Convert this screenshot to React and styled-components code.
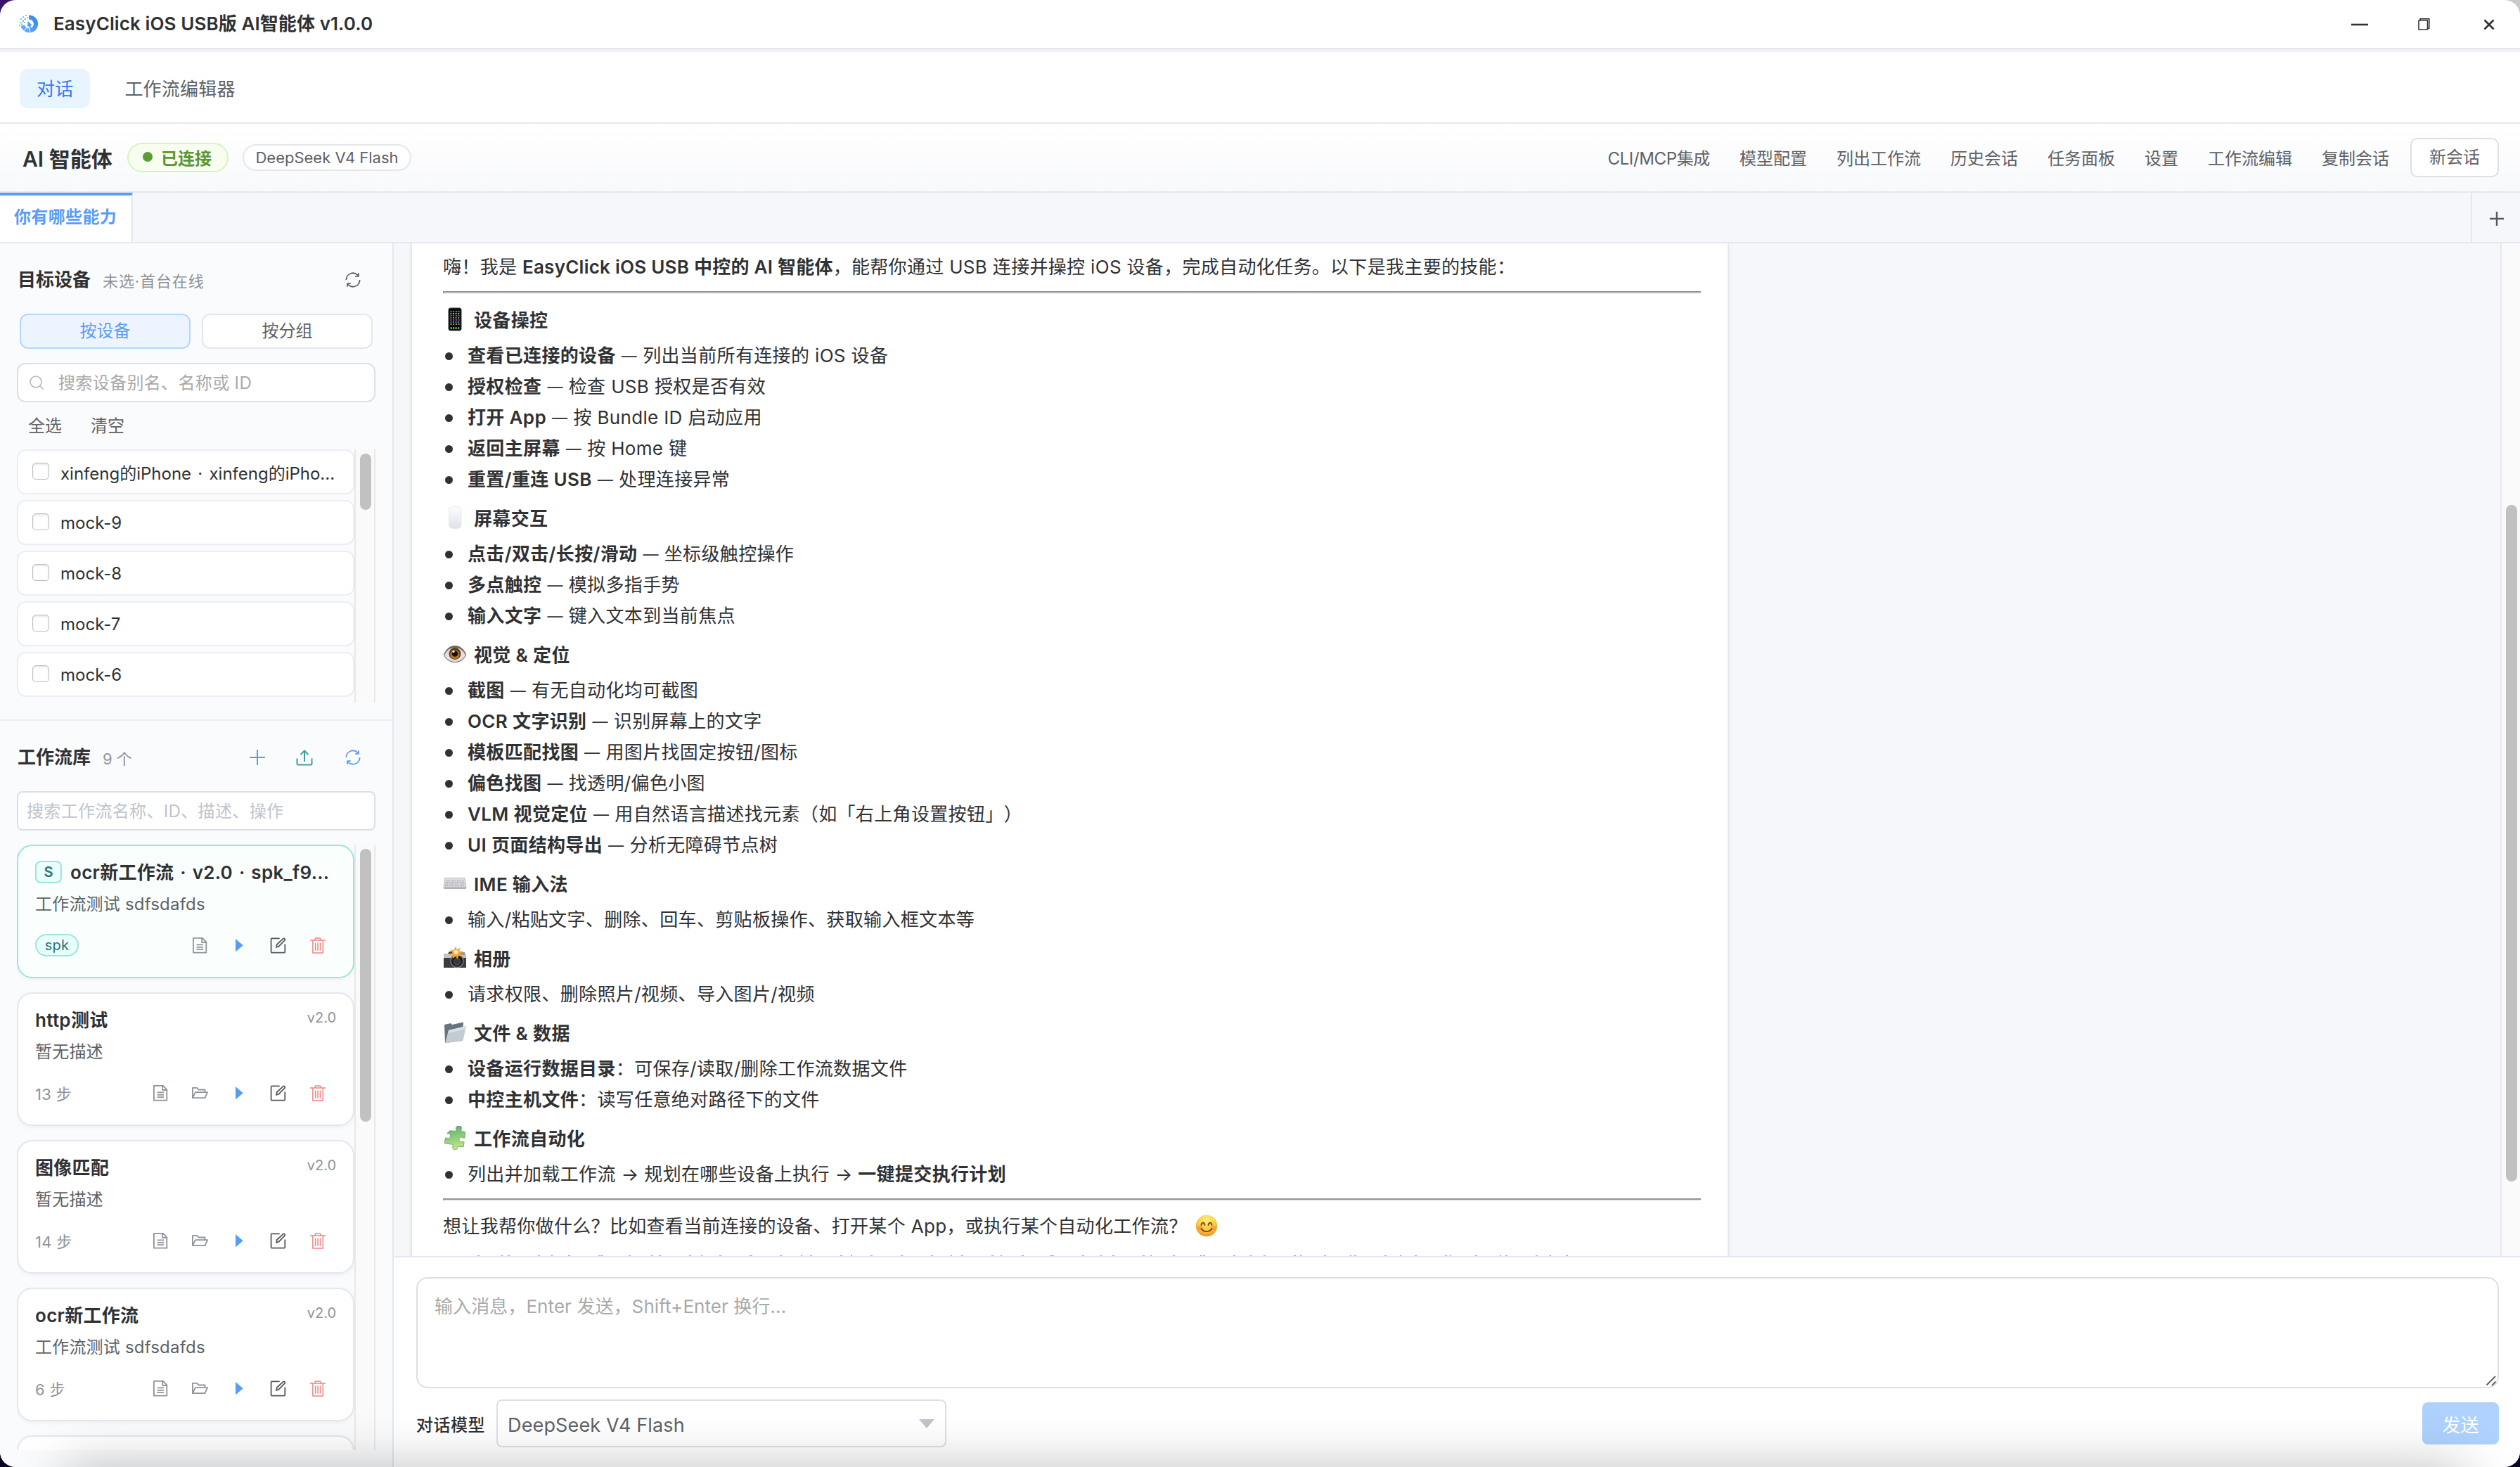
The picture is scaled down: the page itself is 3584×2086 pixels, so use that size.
import React from 'react';
import styled, { createGlobalStyle, css } from 'styled-components';

const GlobalStyle = createGlobalStyle`
	* {
		box-sizing: border-box;
	}
	body {
		margin: 0;
		color: #303133;
		font-family: Inter, 'Noto Sans CJK SC', sans-serif;
		font-size: 26px;
		text-spacing-trim: space-all;
		background:
			linear-gradient(90deg, transparent 50%, #c9c9cb 50%) top / 100% 60px no-repeat,
			linear-gradient(#3a1468, #0b0524);
	}
	input,
	textarea,
	button {
		font-family: inherit;
		margin: 0;
	}
`;

const Window = styled.div`
	position: relative;
	display: flex;
	flex-direction: column;
	width: 3584px;
	height: 2086px;
	overflow: hidden;
	border-radius: 22px;
	background: #fff;
`;

/* soft shadow that the dock throws on the lower edge */
const DockShade = styled.div`
	position: absolute;
	left: 90px;
	right: 78px;
	top: 100%;
	height: 100px;
	border-radius: 20px;
	box-shadow: 0 0 72px rgba(0, 0, 0, 0.25);
	pointer-events: none;
`;

const TitleBar = styled.header`
	display: flex;
	align-items: center;
	height: 70px;
	padding: 0 32px 0 27px;
	border-bottom: 2px solid #e4e7ed;
`;

const Title = styled.div`
	flex: 1;
	margin-left: 21px;
	font-weight: 600;
	letter-spacing: 0.1px;
	line-height: 40px;
	white-space: nowrap;
`;

const WindowButtons = styled.div`
	display: flex;
	align-items: center;
	gap: 68px;
`;

const Nav = styled.nav`
	display: flex;
	align-items: center;
	height: 106px;
	padding: 3px 28px 0;
	border-top: 4px solid #f0f2f6;
	border-bottom: 2px solid #e8e8e8;
`;

const NavTab = styled.div`
	height: 56px;
	padding: 0 24px;
	margin-right: 25px;
	border-radius: 12px;
	line-height: 57px;
	letter-spacing: 0.2px;
	color: ${({ $active }) => ($active ? '#3478f6' : '#606266')};
	background: ${({ $active }) => ($active ? '#e8f4ff' : 'none')};
`;

const Header = styled.div`
	display: flex;
	align-items: center;
	height: 98px;
	padding: 0 30px 0 32px;
	border-bottom: 2px solid #e4e7ed;
	background: linear-gradient(#fff, #f8f9fb);
`;

const HeaderTitle = styled.div`
	width: 149px;
	font-size: 30px;
	font-weight: 600;
	white-space: nowrap;
`;

const Status = styled.div`
	display: flex;
	align-items: center;
	width: 144px;
	height: 42px;
	padding: 0 0 2px 20px;
	border: 2px solid #d9f2bf;
	border-radius: 21px;
	background: #f7fdef;
	color: #5a9632;
	font-size: 24px;
	font-weight: 600;

	&::before {
		content: '';
		width: 14px;
		height: 14px;
		margin-right: 12px;
		border-radius: 50%;
		background: #5f9c38;
	}
`;

const ModelChip = styled.div`
	width: 240px;
	height: 38px;
	margin-left: 20px;
	border: 2px solid #e4e7ed;
	border-radius: 19px;
	background: #fff;
	color: #606266;
	font-size: 22px;
	line-height: 35px;
	text-align: center;
	white-space: nowrap;
`;

const Menu = styled.div`
	display: flex;
	align-items: center;
	gap: 42px;
	margin-left: auto;
	color: #606266;
	font-size: 24px;
	white-space: nowrap;

	span {
		padding-bottom: 2px;
	}
	span:first-child {
		letter-spacing: -0.35px;
	}
`;

const NewChat = styled.div`
	width: 126px;
	height: 56px;
	margin-left: -12px;
	border: 2px solid #dcdfe6;
	border-radius: 10px;
	background: #fff;
	line-height: 51px;
	text-align: center;
`;

const TabStrip = styled.div`
	display: flex;
	justify-content: space-between;
	height: 72px;
	border-bottom: 2px solid #e4e7ed;
	background: #f5f7fb;
`;

const ChatTab = styled.div`
	width: 189px;
	padding-left: 20px;
	border-top: 4px solid #5a9cf8;
	border-right: 2px solid #e4e7ed;
	background: #fff;
	color: #5a9cf8;
	font-size: 24px;
	font-weight: 600;
	letter-spacing: 0.35px;
	line-height: 62px;
	white-space: nowrap;
`;

const AddTab = styled.div`
	display: flex;
	align-items: center;
	justify-content: center;
	width: 70px;
	padding: 3px 0 0 2px;
	border-left: 2px solid #e4e7ed;
	color: #55585d;
`;

const Main = styled.div`
	display: flex;
	flex: 1;
	min-height: 0;
`;

const Sidebar = styled.aside`
	display: flex;
	flex-direction: column;
	width: 560px;
	border-right: 2px solid #e4e7ed;
	background: #fafbfd;
`;

const DevicePanel = styled.section`
	height: 679px;
	padding: 30px 24px 0;
	border-bottom: 2px solid #ebeef5;
`;

const FlowPanel = styled.section`
	height: 1037px;
	padding: 30px 24px 0;
`;

const PanelHead = styled.div`
	display: flex;
	align-items: center;
	height: 44px;
	padding-right: 18px;
	gap: 43px;
`;

const PanelTitle = styled.h3`
	margin: 0 -26px 0 1px;
	font-size: 26px;
	font-weight: 600;
	line-height: 46px;
`;

const PanelNote = styled.span`
	flex: 1;
	padding-top: 3px;
	color: #909399;
	font-size: 22px;
	letter-spacing: ${({ $ls }) => $ls || 0}px;
	line-height: 44px;
`;

const Segments = styled.div`
	display: flex;
	gap: 16px;
	margin-top: 26px;
	padding: 0 4px;
`;

const Segment = styled.div`
	flex: 1;
	height: 50px;
	border: 2px solid ${({ $active }) => ($active ? '#b3d8ff' : '#e4e7ed')};
	border-radius: 12px;
	background: ${({ $active }) => ($active ? '#edf4ff' : '#fff')};
	color: ${({ $active }) => ($active ? '#5a9cf8' : '#606266')};
	font-size: 24px;
	line-height: 46px;
	text-align: center;
`;

const SearchBox = styled.label`
	display: flex;
	align-items: center;
	height: 56px;
	padding-left: ${({ $icon }) => ($icon ? 15 : 12)}px;
	gap: 20px;
	border: 2px solid #dcdfe6;
	border-radius: ${({ $icon }) => ($icon ? 12 : 8)}px;
	background: #fff;
	margin-top: ${({ $icon }) => ($icon ? 20 : 26)}px;

	input {
		flex: 1;
		min-width: 0;
		padding: 1px 0 0;
		border: 0;
		outline: 0;
		background: none;
		font-size: 24px;
		letter-spacing: 0.35px;
		line-height: 40px;
	}
	input::placeholder {
		color: ${({ $icon }) => ($icon ? '#a9a9a9' : '#c0c4cc')};
		opacity: 1;
	}
`;

const PickLinks = styled.div`
	display: flex;
	gap: 41px;
	height: 67px;
	padding-left: 16px;
	color: #606266;
	font-size: 24px;
	line-height: 67px;
`;

const Scroller = styled.div`
	display: flex;
	height: ${({ $h }) => $h}px;
	margin-top: ${({ $top }) => $top || 0}px;
	overflow: hidden;
`;

const List = styled.div`
	display: flex;
	flex-direction: column;
	width: 480px;
	gap: ${({ $gap }) => $gap}px;
`;

const Track = styled.div`
	width: ${({ $w }) => $w || 30}px;
	padding: ${({ $top }) => $top || 6}px 0 0 6px;
	border: solid #e8e8e8;
	border-width: 0 ${({ $w }) => ($w ? 0 : 2)}px 0 2px;
	background: #fafafa;
`;

const Thumb = styled.div`
	width: 16px;
	height: ${({ $h }) => $h}px;
	border-radius: 8px;
	background: #c1c1c1;
`;

const DeviceRow = styled.label`
	display: flex;
	flex: none;
	align-items: center;
	height: 64px;
	padding: 0 12px 0 20px;
	gap: 16px;
	border: 2px solid #ebeef5;
	border-radius: 12px;
	background: #fff;
	font-size: 24px;
	word-spacing: 2.5px;
	white-space: nowrap;
`;

const Check = styled.i`
	flex: none;
	width: 24px;
	height: 24px;
	margin-bottom: 2px;
	border: 1.5px solid #bdbdbd;
	border-radius: 5px;
	background: #fff;
	box-shadow: inset 0 2px 3px rgba(0, 0, 0, 0.1);
`;

const Card = styled.article`
	flex: none;
	height: 190px;
	padding: 17px 24px 0;
	border: 2px solid #e4e7ed;
	border-radius: 22px;
	background: #fff;
	box-shadow: 0 2px 6px rgba(0, 0, 0, 0.05);

	${({ $spk }) =>
		$spk &&
		css`
			border-color: #9ae6dc;
			background: #fafffe;
		`}
`;

const CardHead = styled.div`
	display: flex;
	align-items: center;
	height: 42px;
	gap: 12px;
`;

const CardTitle = styled.div`
	flex: 1;
	font-size: 26px;
	font-weight: 600;
	line-height: 42px;
	letter-spacing: 0.3px;
	word-spacing: 2px;
	white-space: nowrap;
`;

const SpkMark = styled.span`
	width: 38px;
	height: 32px;
	margin-bottom: 2px;
	border: 2px solid #9ae6dc;
	border-radius: 8px;
	background: #e8fffc;
	color: #2b6f76;
	font-size: 20px;
	font-weight: 600;
	line-height: 29px;
	text-align: center;
`;

const Version = styled.span`
	padding-bottom: 8px;
	color: #909399;
	font-size: 20px;
`;

const CardText = styled.div`
	height: 36px;
	margin-top: 6px;
	color: #606266;
	font-size: 24px;
	letter-spacing: 0.2px;
	line-height: 36px;
`;

const CardFoot = styled.div`
	display: flex;
	align-items: center;
	height: 40px;
	margin-top: 20px;
	color: #909399;
	font-size: 22px;
	letter-spacing: 0.3px;
`;

const SpkTag = styled.span`
	width: 62px;
	height: 32px;
	border: 2px solid #9ae6dc;
	border-radius: 16px;
	background: #e8fffc;
	color: #2b6f76;
	font-size: 20px;
	line-height: 29px;
	text-align: center;
`;

const Actions = styled.div`
	display: flex;
	gap: 28px;
	margin-left: auto;
	padding-right: 12px;

	svg {
		width: 28px;
		height: 28px;
	}
`;

const ChatColumn = styled.main`
	display: flex;
	flex-direction: column;
	flex: 1;
	min-width: 0;
`;

const Messages = styled.div`
	display: flex;
	justify-content: space-between;
	height: 1440px;
	padding-left: 24px;
	overflow: hidden;
	background: #f5f7fb;
`;

const Bubble = styled.div`
	width: 1875px;
	padding: 11px 38px 0 44px;
	border: solid #e4e7ed;
	border-width: 0 2px;
	background: #fff;
	box-shadow: 0 2px 8px rgba(0, 0, 0, 0.05);
	white-space: nowrap;
`;

const Paragraph = styled.p`
	display: flex;
	align-items: center;
	margin: 0;
	height: 44px;
	line-height: 45px;
	letter-spacing: 0.32px;
	white-space: pre;

	b {
		font-weight: 600;
		letter-spacing: 0.25px;
	}
	svg {
		margin-left: 10px;
	}
`;

const Rule = styled.hr`
	height: 4px;
	margin: 13px 0 ${({ $after }) => $after}px;
	border: 0;
	border-top: 2px solid #949494;
	border-left: 1px solid #949494;
	border-bottom: 2px solid #eee;
`;

const SectionTitle = styled.h4`
	display: flex;
	align-items: center;
	gap: 10px;
	height: 44px;
	margin: 0 0 6px;
	padding-bottom: 3px;
	font-size: 26px;
	font-weight: 600;
	letter-spacing: 0.35px;

	ul + & {
		margin-top: 12px;
	}
`;

const Bullets = styled.ul`
	margin: 0;
	padding: 0 0 0 3px;
	list-style: none;
`;

const Bullet = styled.li`
	display: flex;
	align-items: center;
	height: 44px;
	padding-top: 2px;
	line-height: 44px;
	letter-spacing: 0.35px;
	white-space: pre;

	&::before {
		content: '';
		width: 11px;
		height: 11px;
		margin-right: 21px;
		border-radius: 50%;
		background: #303133;
	}
	b {
		font-weight: 600;
	}
`;

const Dash = styled.span`
	margin: 0 8px;
	font-size: 22px;
`;

/* upper edge of the next line, cut by the composer */
const CutLine = styled.div`
	width: 1590px;
	height: 2px;
	margin: 20px 0 0 32px;
	background:
		repeating-linear-gradient(90deg, transparent 0 17px, #aaa 17px 20px, transparent 20px 43px),
		repeating-linear-gradient(90deg, transparent 0 51px, #999 51px 53px, transparent 53px 71px);
`;

const Composer = styled.div`
	flex: 1;
	padding: 28px 30px 0 32px;
	border-top: 2px solid #e4e7ed;
	background: #fff;
`;

const InputWrap = styled.div`
	position: relative;
	height: 158px;

	textarea {
		display: block;
		width: 100%;
		height: 100%;
		padding: 19px 24px;
		border: 2px solid #dcdfe6;
		border-radius: 16px;
		outline: 0;
		resize: none;
		font-size: 26px;
		letter-spacing: 0.08px;
		line-height: 42px;
	}
	textarea::placeholder {
		color: #a9a9a9;
		opacity: 1;
	}
	svg {
		position: absolute;
		right: 3px;
		bottom: 3px;
	}
`;

const ComposerFoot = styled.div`
	display: flex;
	align-items: center;
	height: 68px;
	margin-top: 16px;
`;

const ModelLabel = styled.span`
	width: 114px;
	font-size: 24px;
	font-weight: 500;
	letter-spacing: 0.5px;
`;

const ModelSelect = styled.div`
	display: flex;
	align-items: center;
	justify-content: space-between;
	width: 640px;
	height: 68px;
	padding: 4px 15px 0 14px;
	border: 2px solid #dcdfe6;
	border-radius: 8px;
	color: #606266;
	font-size: 27px;
	letter-spacing: 0.15px;
`;

const SendButton = styled.button`
	width: 109px;
	height: 60px;
	margin-left: auto;
	padding: 0;
	border: 0;
	border-radius: 8px;
	background: #aed2fd;
	color: #fff;
	font-size: 26px;
`;

const Stroke = ({ size = 28, box = 28, width = 2, color, children }) => (
	<svg
		width={size}
		height={size}
		viewBox={`0 0 ${box} ${box}`}
		fill="none"
		stroke={color}
		strokeWidth={width}
		strokeLinejoin="round"
	>
		{children}
	</svg>
);

const Logo = () => (
	<svg width="28" height="28" viewBox="0 0 28 28">
		<defs>
			<linearGradient id="logo" x1="0" y1="1" x2="1" y2="0">
				<stop offset="0" stopColor="#6db8ff" />
				<stop offset="1" stopColor="#2f7fe8" />
			</linearGradient>
		</defs>
		<path
			d="M14 1.5A12.5 12.5 0 1 1 2.5 17L8 15.500A6.500 6.500 0 1 0 14 7.500Z"
			fill="url(#logo)"
		/>
		<path d="M12.500 10l6.500 6-3 .4 2 4.500-1.800.7-1.900-4.200-2.200 2z" fill="#4b9cf5" />
		<path d="M6.500 24l7-7M16 27l-1.500-7" stroke="#fff" strokeWidth="1" />
		<g fill="#7cc6dd">
			<path d="M9 1h2v2H9zM11 4h2v2h-2zM5 3h2v2H5zM7.500 6h2.500v2.500H7.500zM2 6h2v2H2zM4.500 9h2.500v2.500H4.500zM1 11h2v2H1zM2.500 13.500h3v2h-3zM0 15h1.500v2H0zM7 11h2v2H7z" />
		</g>
	</svg>
);

const Refresh = ({ color }) => (
	<svg width="28" height="28" viewBox="0 0 1024 1024" fill={color}>
		<path
			transform="matrix(-1 0 0 1 1024 0)"
			d="M771.776 794.88A384 384 0 0 1 128 512h64a320 320 0 0 0 555.712 216.448H654.72a32 32 0 1 1 0-64h149.056a32 32 0 0 1 32 32v148.928a32 32 0 1 1-64 0v-50.56zM276.288 295.616h92.992a32 32 0 0 1 0 64H220.16a32 32 0 0 1-32-32V178.56a32 32 0 0 1 64 0v50.56A384 384 0 0 1 896.128 512h-64a320 320 0 0 0-555.776-216.384z"
		/>
	</svg>
);

const DocIcon = () => (
	<Stroke color="#909399" width={1.8}>
		<path d="M4.900 3.900h13l5.400 5.400v15.400H4.900zM17.200 3.900V10h6.100M9.500 13.400h9.500M9.500 16.800h9.500M9.500 20.200h9.500" />
	</Stroke>
);

const FolderIcon = () => (
	<Stroke color="#909399" width={1.8}>
		<path d="M3.900 21.200V6.900h6.300l2.300 2.600h9v3.700M3.900 21.200l4-8h17.200l-3.600 8z" />
	</Stroke>
);

const PlayIcon = () => (
	<svg viewBox="0 0 28 28">
		<path d="M9 5v18.500l10.700-9.300z" fill="#579df8" />
	</svg>
);

const EditIcon = () => (
	<Stroke color="#55585d" width={1.8}>
		<g transform="translate(-.8 0)">
			<path d="M16.500 4.400H5.400q-1 0-1 1v18.200q0 1 1 1h17.700q1 0 1-1V12.500" />
			<path d="M11.800 17l.8-4 8.800-8.200q1.300-.8 2.300.2.900 1 0 2.200l-8.300 8.500z" />
		</g>
	</Stroke>
);

const TrashIcon = () => (
	<Stroke color="#ef8484" width={1.5}>
		<path d="M3 7.100h22M10.300 7V4.800q0-.8.8-.8h5.800q.8 0 .8.8V7M6.900 7.100v18h14.400v-18M10.700 10.500v11.200M14.100 10.500v11.200M17.500 10.500v11.200" />
	</Stroke>
);

const emojis = {
	phone: (
		<>
			<rect x="8" y="1" width="18" height="32" rx="2.500" fill="#0a0a0c" stroke="#3c3c40" />
			{['#62d66b', '#f4f4f4', '#4fb3f6', '#f59e42', '#d866c9', '#58cbe0', '#f5d24a'].map(
				(color, i) => (
					<path
						key={color}
						d={`M10.500 ${6 + i * 3}h13`}
						stroke={color}
						strokeWidth="1.700"
						strokeDasharray="1.900 1.800"
						strokeDashoffset={i % 2 ? 0.3 : 0}
					/>
				),
			)}
			<path d="M10.500 29.500h13" stroke="#8fe39a" strokeWidth="2.200" strokeDasharray="2.300 1.200" />
		</>
	),
	pane: (
		<>
			<defs>
				<linearGradient id="pane" x1="0" y1="0" x2="0" y2="1">
					<stop offset="0" stopColor="#fdfdfe" />
					<stop offset="1" stopColor="#dde3e8" />
				</linearGradient>
			</defs>
			<rect x="8.500" y="1.500" width="17.500" height="31" rx="5" fill="url(#pane)" stroke="#e6e9ec" />
		</>
	),
	eye: (
		<>
			<path d="M.800 18C5 8.500 11 5 17 5s12.500 3.500 16.200 13c-3 7-9 11-16.200 11S4 25 .800 18z" fill="#6f625f" />
			<path d="M2 18.500C6 10.500 11 8 17 8s11.500 3 15 10.500c-3 6-8.500 9.500-15 9.500S5 24.500 2 18.500z" fill="#e6dfe2" />
			<circle cx="17" cy="16.500" r="8.500" fill="#5d3a16" />
			<circle cx="17" cy="17.500" r="6.600" fill="#b3782a" />
			<circle cx="17" cy="16.500" r="4.300" fill="#1b0f0a" />
			<circle cx="15" cy="13.500" r="1.600" fill="#fff" />
		</>
	),
	keyboard: (
		<>
			<path d="M3 9.500h28l2 13.500H1z" fill="#e2e3e5" stroke="#b4b6b9" />
			<path d="M1 23h32v1.800H1z" fill="#a0a2a5" />
			<path d="M4 12.500h26M3.500 15.300h27M3 18h28M3 20.700h28" stroke="#97999d" strokeWidth="1.200" strokeDasharray="1.600 .700" />
		</>
	),
	camera: (
		<>
			<path d="M1 11h6l2-3h9l3 3h12v20H1z" fill="#3b3c3e" />
			<path d="M1 11h32v6H1z" fill="#c3c4c6" />
			<path d="M24 9h7v4h-7z" fill="#98999b" />
			<circle cx="20" cy="21.500" r="9" fill="#1c1d1f" stroke="#77797c" strokeWidth="1.500" />
			<circle cx="20" cy="22.500" r="4.500" fill="#34373c" stroke="#5f6266" />
			<path d="M18 .500l2 5 4.500-3-1.500 5 6 .5-5 3 3.500 4-5.500-1-1 5-3-4-4.500 3 1-5-6-.5 5-3-3.500-4.500 5.500 1.500z" fill="#f7a334" />
			<circle cx="18.500" cy="9" r="3" fill="#fff3c4" />
		</>
	),
	folder: (
		<>
			<path d="M2 6l9-2 2 2 16-3.500L27 29 3 32z" fill="#66747f" />
			<path d="M8 14l25-6-4.500 20.500L3 32.500z" fill="#c4cbd1" />
			<path d="M8 14l25-6-1 4L7.500 18z" fill="#dbe0e4" />
		</>
	),
	puzzle: (
		<>
			<defs>
				<linearGradient id="puzzle" x1="0" y1="0" x2="0" y2="1">
					<stop offset="0" stopColor="#62b274" />
					<stop offset="1" stopColor="#c2ec86" />
				</linearGradient>
			</defs>
			<path
				transform="rotate(-12 17 17)"
				d="M12 5.500l8 2.300c1.500-.8.900-2.300 1.500-4.500 1.200-3.300 7.400-2.500 7.700 1 .2 2.200-2 3.300-1.200 5.200l5 2.500-2.600 8c-2 .6-2.800-2.300-5-2.300-3.400.2-4.200 5.200-1.400 6.800 1.900.9 3.500-.8 4.700.6l-2.500 6.900-7-2c-1.900.2-1.200 2.500-3.200 3.400-3.200 1-5.600-1.200-5-4 .5-2 2-2.600 1-3.900L1 21.500l2.600-7c1.500-1 2.500 1 4.700 1.300 3.200-.2 4.200-4.600 1.700-6.500-1.200-1-2.100.3-2.500-1z"
				fill="url(#puzzle)"
				stroke="#5d8f4e"
				strokeWidth=".700"
			/>
		</>
	),
	smile: (
		<>
			<defs>
				<radialGradient id="smile" cx=".5" cy=".25" r=".8">
					<stop offset="0" stopColor="#fff27a" />
					<stop offset=".6" stopColor="#fcc43c" />
					<stop offset="1" stopColor="#e8862a" />
				</radialGradient>
			</defs>
			<circle cx="17" cy="17" r="15.300" fill="url(#smile)" />
			<ellipse cx="7.500" cy="20" rx="4" ry="3" fill="#f58a3c" opacity=".6" />
			<ellipse cx="26.500" cy="20" rx="4" ry="3" fill="#f58a3c" opacity=".6" />
			<path
				d="M9.500 16c.8-4.500 4.200-4.500 5 0M19.500 16c.8-4.500 4.200-4.500 5 0M9.500 21c3.500 5.500 11.500 5.500 15 0"
				fill="none"
				stroke="#7b4311"
				strokeWidth="1.900"
				strokeLinecap="round"
			/>
		</>
	),
};

const Emoji = ({ name }) => (
	<svg width="34" height="34" viewBox="0 0 34 34">
		{emojis[name]}
	</svg>
);

const menuItems = [
	'CLI/MCP集成',
	'模型配置',
	'列出工作流',
	'历史会话',
	'任务面板',
	'设置',
	'工作流编辑',
	'复制会话',
];

const devices = ['xinfeng的iPhone · xinfeng的iPho...', 'mock-9', 'mock-8', 'mock-7', 'mock-6'];

const flows = [
	{ title: 'ocr新工作流 · v2.0 · spk_f9...', text: '工作流测试 sdfsdafds', spk: true },
	{ title: 'http测试', text: '暂无描述', steps: 13 },
	{ title: '图像匹配', text: '暂无描述', steps: 14 },
	{ title: 'ocr新工作流', text: '工作流测试 sdfsdafds', steps: 6 },
];

const sections = [
	{
		emoji: 'phone',
		title: '设备操控',
		items: [
			{ name: '查看已连接的设备', dash: true, text: '列出当前所有连接的 iOS 设备' },
			{ name: '授权检查', dash: true, text: '检查 USB 授权是否有效' },
			{ name: '打开 App', dash: true, text: '按 Bundle ID 启动应用' },
			{ name: '返回主屏幕', dash: true, text: '按 Home 键' },
			{ name: '重置/重连 USB', dash: true, text: '处理连接异常' },
		],
	},
	{
		emoji: 'pane',
		title: '屏幕交互',
		items: [
			{ name: '点击/双击/长按/滑动', dash: true, text: '坐标级触控操作' },
			{ name: '多点触控', dash: true, text: '模拟多指手势' },
			{ name: '输入文字', dash: true, text: '键入文本到当前焦点' },
		],
	},
	{
		emoji: 'eye',
		title: '视觉 & 定位',
		items: [
			{ name: '截图', dash: true, text: '有无自动化均可截图' },
			{ name: 'OCR 文字识别', dash: true, text: '识别屏幕上的文字' },
			{ name: '模板匹配找图', dash: true, text: '用图片找固定按钮/图标' },
			{ name: '偏色找图', dash: true, text: '找透明/偏色小图' },
			{
				name: 'VLM 视觉定位',
				dash: true,
				text: '用自然语言描述找元素（如「右上角设置按钮」）',
			},
			{ name: 'UI 页面结构导出', dash: true, text: '分析无障碍节点树' },
		],
	},
	{
		emoji: 'keyboard',
		title: 'IME 输入法',
		items: [{ text: '输入/粘贴文字、删除、回车、剪贴板操作、获取输入框文本等' }],
	},
	{
		emoji: 'camera',
		title: '相册',
		items: [{ text: '请求权限、删除照片/视频、导入图片/视频' }],
	},
	{
		emoji: 'folder',
		title: '文件 & 数据',
		items: [
			{ name: '设备运行数据目录', text: '：可保存/读取/删除工作流数据文件' },
			{ name: '中控主机文件', text: '：读写任意绝对路径下的文件' },
		],
	},
	{
		emoji: 'puzzle',
		title: '工作流自动化',
		items: [{ text: '列出并加载工作流 → 规划在哪些设备上执行 → ', tail: '一键提交执行计划' }],
	},
];

const FlowCard = ({ title, text, steps, spk }) => (
	<Card $spk={spk}>
		<CardHead>
			{spk && <SpkMark>S</SpkMark>}
			<CardTitle>{title}</CardTitle>
			{!spk && <Version>v2.0</Version>}
		</CardHead>
		<CardText>{text}</CardText>
		<CardFoot>
			{spk ? <SpkTag>spk</SpkTag> : <span>{steps} 步</span>}
			<Actions>
				<DocIcon />
				{!spk && <FolderIcon />}
				<PlayIcon />
				<EditIcon />
				<TrashIcon />
			</Actions>
		</CardFoot>
	</Card>
);

const App = () => (
	<>
		<GlobalStyle />
		<Window>
			<TitleBar>
				<Logo />
				<Title>EasyClick iOS USB版 AI智能体 v1.0.0</Title>
				<WindowButtons>
					<Stroke size={24} box={24} width={2.600} color="#303133">
						<path d="M0 13h24" />
					</Stroke>
					<Stroke size={24} box={24} width={1.600} color="#303133">
						<path d="M4 7h12.500v13H4zM6 6.500V4.800h12.800v13.500H17" />
					</Stroke>
					<Stroke size={24} box={24} width={2.600} color="#303133">
						<path d="M5.500 6.500l13 13M18.500 6.500l-13 13" />
					</Stroke>
				</WindowButtons>
			</TitleBar>
			<Nav>
				<NavTab $active>对话</NavTab>
				<NavTab>工作流编辑器</NavTab>
			</Nav>
			<Header>
				<HeaderTitle>AI 智能体</HeaderTitle>
				<Status>已连接</Status>
				<ModelChip>DeepSeek V4 Flash</ModelChip>
				<Menu>
					{menuItems.map((item) => (
						<span key={item}>{item}</span>
					))}
					<NewChat>新会话</NewChat>
				</Menu>
			</Header>
			<TabStrip>
				<ChatTab>你有哪些能力</ChatTab>
				<AddTab>
					<Stroke size={20} box={20} width={2.400} color="#55585d">
						<path d="M10 0v20M0 10h20" />
					</Stroke>
				</AddTab>
			</TabStrip>
			<Main>
				<Sidebar>
					<DevicePanel>
						<PanelHead>
							<PanelTitle>目标设备</PanelTitle>
							<PanelNote $ls={0.9}>未选·首台在线</PanelNote>
							<Refresh color="#606266" />
						</PanelHead>
						<Segments>
							<Segment $active>按设备</Segment>
							<Segment>按分组</Segment>
						</Segments>
						<SearchBox $icon>
							<Stroke size={22} box={22} width={1.600} color="#b4b7be">
								<circle cx="10" cy="10" r="8" />
								<path d="M16 16l4.500 4.500" />
							</Stroke>
							<input placeholder="搜索设备别名、名称或 ID" />
						</SearchBox>
						<PickLinks>
							<span>全选</span>
							<span>清空</span>
						</PickLinks>
						<Scroller $h={360}>
							<List $gap={8}>
								{devices.map((device) => (
									<DeviceRow key={device}>
										<Check />
										<span>{device}</span>
									</DeviceRow>
								))}
							</List>
							<Track>
								<Thumb $h={80} />
							</Track>
						</Scroller>
					</DevicePanel>
					<FlowPanel>
						<PanelHead>
							<PanelTitle>工作流库</PanelTitle>
							<PanelNote>9 个</PanelNote>
							<Stroke size={24} box={24} color="#579df8">
								<path d="M12 1v22M1 12h22" />
							</Stroke>
							<Stroke size={24} box={24} color="#3f9d9d">
								<path d="M1.500 13.500v7.500q0 1.500 1.500 1.500h18q1.500 0 1.500-1.500v-7.500M12 18V2.500M6.500 8L12 2.500 17.500 8" />
							</Stroke>
							<Refresh color="#579df8" />
						</PanelHead>
						<SearchBox>
							<input placeholder="搜索工作流名称、ID、描述、操作" />
						</SearchBox>
						<Scroller $h={861} $top={20}>
							<List $gap={20}>
								{flows.map((flow) => (
									<FlowCard key={flow.title} {...flow} />
								))}
								<Card />
							</List>
							<Track>
								<Thumb $h={388} />
							</Track>
						</Scroller>
					</FlowPanel>
				</Sidebar>
				<ChatColumn>
					<Messages>
						<Bubble>
							<Paragraph>
								嗨！我是 <b>EasyClick iOS USB 中控的 AI 智能体</b>
								，能帮你通过 USB 连接并操控 iOS 设备，完成自动化任务。以下是我主要的技能：
							</Paragraph>
							<Rule $after={15} />
							{sections.map(({ emoji, title, items }) => (
								<React.Fragment key={title}>
									<SectionTitle>
										<Emoji name={emoji} />
										{title}
									</SectionTitle>
									<Bullets>
										{items.map(({ name, dash, text, tail }) => (
											<Bullet key={text}>
												{name && <b>{name}</b>}
												{dash && <Dash>—</Dash>}
												{text}
												{tail && <b>{tail}</b>}
											</Bullet>
										))}
									</Bullets>
								</React.Fragment>
							))}
							<Rule $after={13} />
							<Paragraph>
								想让我帮你做什么？比如查看当前连接的设备、打开某个 App，或执行某个自动化工作流？
								<Emoji name="smile" />
							</Paragraph>
							<CutLine />
						</Bubble>
						<Track $w={28} $top={372}>
							<Thumb $h={962} />
						</Track>
					</Messages>
					<Composer>
						<InputWrap>
							<textarea placeholder="输入消息，Enter 发送，Shift+Enter 换行..." />
							<Stroke size={16} box={16} color="#606266">
								<path d="M1.500 14.500L14 2M9 15l5.500-5.500" />
							</Stroke>
						</InputWrap>
						<ComposerFoot>
							<ModelLabel>对话模型</ModelLabel>
							<ModelSelect>
								DeepSeek V4 Flash
								<svg width="22" height="16" viewBox="0 0 22 16">
									<path d="M0 0h22L11 13z" fill="#c0c4cc" />
								</svg>
							</ModelSelect>
							<SendButton>发送</SendButton>
						</ComposerFoot>
					</Composer>
				</ChatColumn>
			</Main>
			<DockShade />
		</Window>
	</>
);

export default App;
